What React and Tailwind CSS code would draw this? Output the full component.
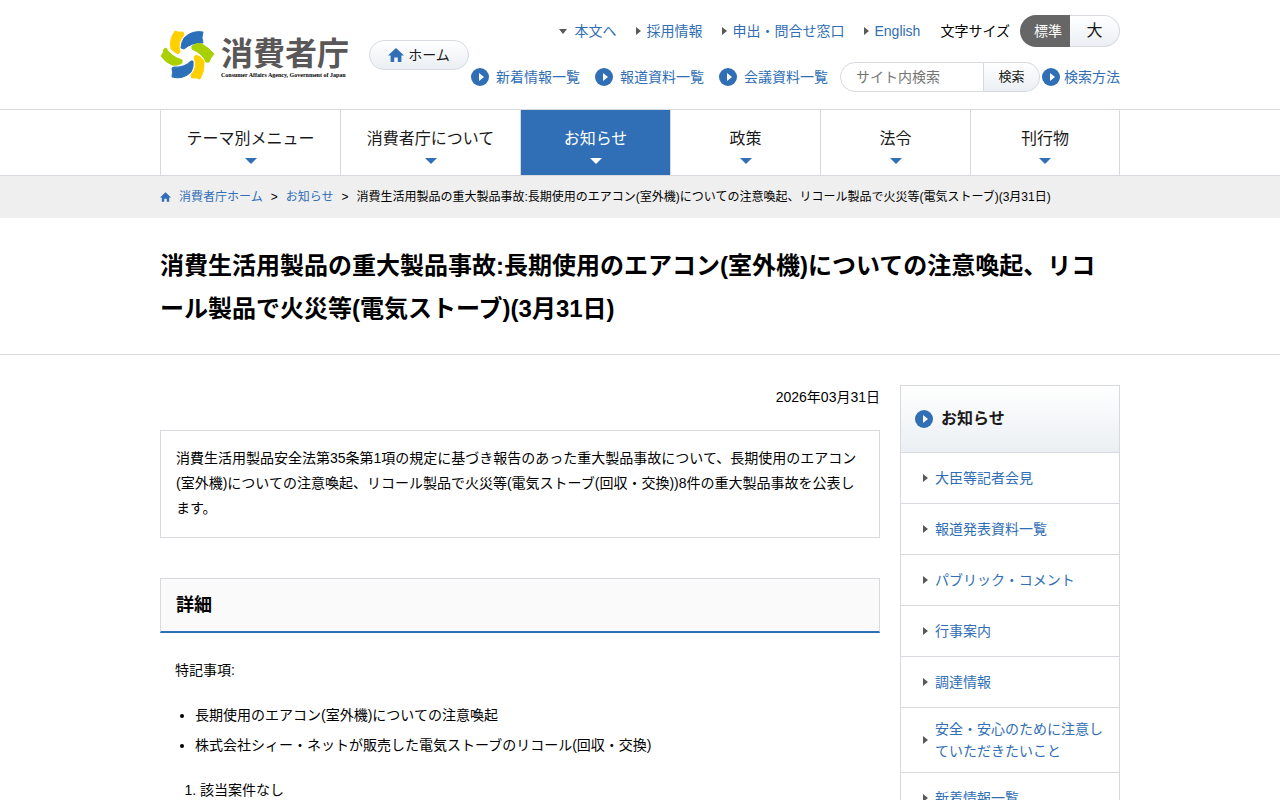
import React from 'react';

const headerLinks = ['採用情報', '申出・問合せ窓口', 'English'];
const listLinks = ['新着情報一覧', '報道資料一覧', '会議資料一覧'];

const navItems = [
  { label: 'テーマ別メニュー', width: 'w-[180px]' },
  { label: '消費者庁について', width: 'w-[180px]' },
  { label: 'お知らせ', width: 'w-[150px]', active: true },
  { label: '政策', width: 'w-[150px]' },
  { label: '法令', width: 'w-[150px]' },
  { label: '刊行物', width: 'w-[150px]' },
];

const sideItems = [
  '大臣等記者会見',
  '報道発表資料一覧',
  'パブリック・コメント',
  '行事案内',
  '調達情報',
  '安全・安心のために注意していただきたいこと',
  '新着情報一覧',
];

const pageTitle =
  '消費生活用製品の重大製品事故:長期使用のエアコン(室外機)についての注意喚起、リコール製品で火災等(電気ストーブ)(3月31日)';

const CircleArrow = () => (
  <svg className="h-[18px] w-[18px] shrink-0" viewBox="0 0 18 18" aria-hidden="true">
    <circle cx="9" cy="9" r="9" fill="#306eb5" />
    <path d="M8 5 L13 9 L8 13 Z" fill="#fff" />
  </svg>
);

const SmallArrow = () => (
  <svg className="h-2 w-[5px] shrink-0" viewBox="0 0 5 8" aria-hidden="true">
    <path d="M0 0 L5 4 L0 8 Z" fill="#595959" />
  </svg>
);

const HomeIcon = ({ className }) => (
  <svg className={className} viewBox="0 0 16 14" aria-hidden="true">
    <path d="M8 0 L16 7.6 H13.4 V14 H9.8 V9.6 H6.2 V14 H2.6 V7.6 H0 Z" fill="#306eb5" />
  </svg>
);

const Logo = () => (
  <a href="#" className="flex items-center gap-[6px]">
    <svg className="h-[50px] w-[55px]" viewBox="0 0 55 50" strokeWidth="1" strokeLinejoin="round" aria-hidden="true">
      <path d="M15 1 Q19 3 23 2 L24 5 Q17 12 20 22 L18 24 Q14 22 11 19 Q9 9 15 1 Z" fill="#ffd000" stroke="#ffd000" />
      <path d="M43 2 Q41 8 43 13 Q32 12 24 19 L21 18 Q21 13 24 8 Q32 0 43 2 Z" fill="#2c70b9" stroke="#2c70b9" />
      <path d="M32 16 Q37 12 42 14 Q49 18 54 24 Q50 28 49 32 L46 32 Q43 24 32 19 Z" fill="#a9d000" stroke="#a9d000" />
      <path d="M36 25 Q42 27 44 31 Q45 41 40 49 Q36 47 32 48 L31 45 Q38 38 34 27 Z" fill="#ffd000" stroke="#ffd000" />
      <path d="M33 31 Q34 37 31 42 Q23 50 12 47 Q13 42 12 38 L14 37 Q24 38 31 31 Z" fill="#2c70b9" stroke="#2c70b9" />
      <path d="M6 18 Q10 26 22 30 L22 33 Q18 36 12 35 Q5 32 1 26 Q4 23 4 19 Z" fill="#a9d000" stroke="#a9d000" />
    </svg>
    <span className="block w-[128px]">
      <span className="block font-['Noto_Sans_CJK_JP',sans-serif] text-[32px] leading-10 font-bold whitespace-nowrap text-[#595757]">
        消費者庁
      </span>
      <span className="block font-['Liberation_Serif',serif] text-[6px] leading-2 font-bold whitespace-nowrap">
        Consumer Affairs Agency, Government of Japan
      </span>
    </span>
  </a>
);

const Header = () => (
  <header className="border-b border-[#d6d9de]">
    <div className="mx-auto flex max-w-[960px] justify-between pt-[15px] pb-[17px]">
      <div className="flex items-start gap-[20px] pt-[15px]">
        <Logo />
        <a
          href="#"
          className="mt-[10px] flex h-[30px] w-[100px] items-center justify-center gap-1 rounded-full border border-[#d6d9de] bg-linear-to-b from-white to-[#ebeff3] text-[#1a1a1a]"
        >
          <HomeIcon className="h-[14px] w-4" />
          ホーム
        </a>
      </div>
      <div className="flex flex-col items-end gap-[15px]">
        <div className="flex h-8 items-center gap-5">
          <a href="#main" className="flex items-center gap-[7px] text-[#306eb5]">
            <svg className="h-[5px] w-2" viewBox="0 0 8 5" aria-hidden="true">
              <path d="M0 0 H8 L4 5 Z" fill="#595959" />
            </svg>
            本文へ
          </a>
          {headerLinks.map(label => (
            <a key={label} href="#" className="flex items-center gap-[5px] text-[#306eb5]">
              <SmallArrow />
              {label}
            </a>
          ))}
          <div className="flex items-center gap-[10px]">
            <span>文字サイズ</span>
            <div className="flex h-8">
              <button type="button" className="w-[50px] rounded-l-full bg-[#666] pl-[6px] text-white">
                標準
              </button>
              <button
                type="button"
                className="w-[50px] rounded-r-full border border-l-0 border-[#d6d9de] bg-linear-to-b from-white to-[#ebeff3] text-base text-[#1a1a1a]"
              >
                大
              </button>
            </div>
          </div>
        </div>
        <div className="flex items-center">
          <div className="flex gap-[15px]">
            {listLinks.map(label => (
              <a key={label} href="#" className="flex items-center gap-[7px] text-[#306eb5]">
                <CircleArrow />
                {label}
              </a>
            ))}
          </div>
          <form className="ml-3 flex h-[30px] w-[200px]" onSubmit={e => e.preventDefault()}>
            <input
              type="text"
              aria-label="サイト内検索"
              placeholder="サイト内検索"
              className="min-w-0 flex-1 rounded-l-full border border-[#d6d9de] pl-[15px] text-sm placeholder:text-[#757575]"
            />
            <button
              type="submit"
              className="w-14 rounded-r-full border border-l-0 border-[#d6d9de] bg-linear-to-b from-white to-[#ebeff3] text-[13px] text-[#1a1a1a]"
            >
              検索
            </button>
          </form>
          <a href="#" className="ml-[2px] flex items-center gap-1 text-[#306eb5]">
            <CircleArrow />
            検索方法
          </a>
        </div>
      </div>
    </div>
  </header>
);

const GlobalNav = () => (
  <nav className="border-b border-[#d6d9de]">
    <ul className="mx-auto flex max-w-[960px]">
      {navItems.map(item => (
        <li key={item.label} className={`${item.width} border-l border-[#d6d9de] last:border-r`}>
          <a
            href="#"
            className={`flex h-[65px] flex-col items-center pt-[17px] text-base leading-6 ${
              item.active ? 'bg-[#306eb5] text-white' : 'text-[#1a1a1a]'
            }`}
          >
            {item.label}
            <svg className="mt-[7px] h-[6px] w-3" viewBox="0 0 12 6" aria-hidden="true">
              <path d="M0 0 H12 L6 6 Z" fill={item.active ? '#fff' : '#306eb5'} />
            </svg>
          </a>
        </li>
      ))}
    </ul>
  </nav>
);

const Breadcrumb = () => (
  <div className="bg-[#efefef]">
    <ol className="mx-auto flex h-[42px] max-w-[960px] items-center gap-2 text-xs">
      <li>
        <a href="#" className="flex items-center gap-2 text-[#306eb5]">
          <HomeIcon className="h-[10px] w-[11px]" />
          消費者庁ホーム
        </a>
      </li>
      <li>&gt;</li>
      <li>
        <a href="#" className="text-[#306eb5]">お知らせ</a>
      </li>
      <li>&gt;</li>
      <li>{pageTitle}</li>
    </ol>
  </div>
);

const SideMenu = () => (
  <aside className="w-[220px] shrink-0 self-start border border-[#d6d9de]">
    <a
      href="#"
      className="flex h-[66px] items-center gap-2 bg-linear-to-b from-white to-[#ebeff3] pl-[14px] text-base font-bold text-[#1a1a1a]"
    >
      <CircleArrow />
      お知らせ
    </a>
    <ul>
      {sideItems.map(label => (
        <li key={label} className="border-t border-[#d6d9de]">
          <a href="#" className="flex min-h-[50px] items-center gap-[7px] py-[10px] pr-3 pl-[22px] leading-[22px] text-[#306eb5]">
            <SmallArrow />
            <span>{label}</span>
          </a>
        </li>
      ))}
    </ul>
  </aside>
);

export default function App() {
  return (
    <div className="min-h-screen bg-white font-['Liberation_Sans','Noto_Sans_CJK_JP',sans-serif] text-sm text-black" lang="ja">
      <Header />
      <GlobalNav />
      <Breadcrumb />
      <div className="border-b border-[#d6d9de]">
        <h1 className="mx-auto max-w-[960px] pt-[26px] pr-2 pb-6 text-2xl leading-[43px] font-bold">{pageTitle}</h1>
      </div>
      <div className="mx-auto flex max-w-[960px] gap-5 pt-[30px]">
        <main id="main" className="min-w-0 flex-1 pb-10 leading-[25px]">
          <p className="text-right">2026年03月31日</p>
          <p className="mt-5 border border-[#d6d9de] px-[15px] pt-[15px] pb-4">
            消費生活用製品安全法第35条第1項の規定に基づき報告のあった重大製品事故について、長期使用のエアコン(室外機)についての注意喚起、リコール製品で火災等(電気ストーブ(回収・交換))8件の重大製品事故を公表します。
          </p>
          <h2 className="mt-10 border border-b-2 border-[#d6d9de] border-b-[#306eb5] bg-[#fafafa] px-[15px] text-lg leading-[52px] font-bold">
            詳細
          </h2>
          <p className="mt-[25px] pl-[15px]">特記事項:</p>
          <ul className="mt-5 list-disc space-y-[5px] pl-[35px]">
            <li>長期使用のエアコン(室外機)についての注意喚起</li>
            <li>株式会社シィー・ネットが販売した電気ストーブのリコール(回収・交換)</li>
          </ul>
          <ol className="mt-5 list-decimal pl-10">
            <li>該当案件なし</li>
          </ol>
        </main>
        <SideMenu />
      </div>
    </div>
  );
}
